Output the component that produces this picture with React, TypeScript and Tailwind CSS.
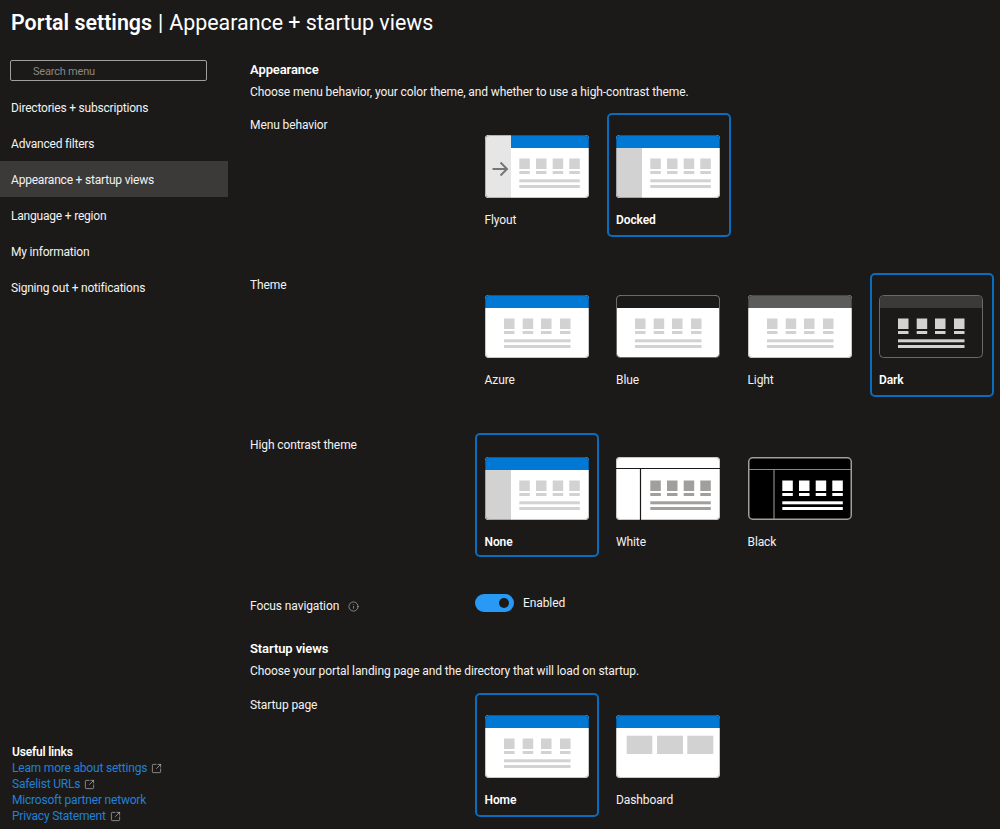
import { Info, SquareArrowOutUpRight } from 'lucide-react';

const MENU = [
  'Directories + subscriptions',
  'Advanced filters',
  'Appearance + startup views',
  'Language + region',
  'My information',
  'Signing out + notifications',
];

const LINKS = [
  { label: 'Learn more about settings', external: true },
  { label: 'Safelist URLs', external: true },
  { label: 'Microsoft partner network', external: false },
  { label: 'Privacy Statement', external: true },
];

type Variant =
  | 'flyout' | 'docked' | 'azure' | 'blue' | 'light' | 'dark'
  | 'none' | 'white' | 'black' | 'home' | 'dashboard';

const HEADER = 'M4 0H100a4 4 0 0 1 4 4V13H0V4a4 4 0 0 1 4-4Z';

function Blocks({ x, fill, w = 10.5 }: { x: number[]; fill: string; w?: number }) {
  const end = x[3] + w;
  return (
    <g fill={fill}>
      {x.map((v) => (
        <g key={v}>
          <rect x={v} y={23.5} width={w} height={10.5} />
          <rect x={v} y={36} width={w} height={3} />
        </g>
      ))}
      <rect x={x[0]} y={44.3} width={end - x[0]} height={3} />
      <rect x={x[0]} y={50} width={end - x[0]} height={3} />
    </g>
  );
}

const CENTER = [19, 37.7, 56, 75];
const RIGHT = [34.3, 51, 67.7, 84.3];

function Thumb({ variant }: { variant: Variant }) {
  let body = null;
  if (variant === 'flyout') {
    body = (
      <>
        <rect width="104" height="63" rx="4" fill="#fff" />
        <path d="M4 0H26V63H4a4 4 0 0 1-4-4V4a4 4 0 0 1 4-4Z" fill="#e6e6e6" />
        <path d="M26 0H100a4 4 0 0 1 4 4V13H26Z" fill="#0078d4" />
        <path d="M7.5 34H21.5M15.5 27.5L22 34L15.5 40.5" fill="none" stroke="#767676" strokeWidth="2" />
        <Blocks x={RIGHT} fill="#d2d2d2" />
      </>
    );
  } else if (variant === 'docked' || variant === 'none') {
    body = (
      <>
        <rect width="104" height="63" rx="4" fill="#fff" />
        <path d="M0 13H26V63H4a4 4 0 0 1-4-4Z" fill="#d2d2d2" />
        <path d={HEADER} fill="#0078d4" />
        <Blocks x={RIGHT} fill="#d2d2d2" />
      </>
    );
  } else if (variant === 'azure' || variant === 'home') {
    body = (
      <>
        <rect width="104" height="63" rx="4" fill="#fff" />
        <path d={HEADER} fill="#0078d4" />
        <Blocks x={CENTER} fill="#d2d2d2" />
      </>
    );
  } else if (variant === 'blue') {
    body = (
      <>
        <rect x=".5" y=".5" width="103" height="62" rx="4" fill="#fff" stroke="#6b6a69" />
        <path d="M4 1H100a3 3 0 0 1 3 3V13H1V4a3 3 0 0 1 3-3Z" fill="#1b1a19" />
        <Blocks x={CENTER} fill="#d2d2d2" />
      </>
    );
  } else if (variant === 'light') {
    body = (
      <>
        <rect width="104" height="63" rx="4" fill="#fff" />
        <path d={HEADER} fill="#5c5c5b" />
        <Blocks x={CENTER} fill="#d2d2d2" />
      </>
    );
  } else if (variant === 'dark') {
    body = (
      <>
        <rect x=".5" y=".5" width="103" height="62" rx="4" fill="#1b1a19" stroke="#6b6a69" />
        <path d="M4 1H100a3 3 0 0 1 3 3V13H1V4a3 3 0 0 1 3-3Z" fill="#3b3a39" />
        <Blocks x={CENTER} fill="#d2d2d2" />
      </>
    );
  } else if (variant === 'white') {
    body = (
      <>
        <rect width="104" height="63" rx="4" fill="#fff" />
        <path d="M0 11.5H104M24.5 11.5V63" stroke="#1b1a19" strokeWidth="1.2" fill="none" />
        <Blocks x={RIGHT} fill="#a19f9d" />
      </>
    );
  } else if (variant === 'black') {
    body = (
      <>
        <rect x=".75" y=".75" width="102.5" height="61.5" rx="4" fill="#000" stroke="#a19f9d" strokeWidth="1.5" />
        <path d="M1 12.5H103M26 12.5V62" stroke="#8a8886" strokeWidth="1.2" fill="none" />
        <Blocks x={RIGHT} fill="#fff" />
      </>
    );
  } else if (variant === 'dashboard') {
    body = (
      <>
        <rect width="104" height="63" rx="4" fill="#fff" />
        <path d={HEADER} fill="#0078d4" />
        <g fill="#d2d2d2">
          <rect x="10.7" y="20.7" width="25.6" height="18.3" />
          <rect x="41" y="20.7" width="26" height="18.3" />
          <rect x="71.3" y="20.7" width="26" height="18.3" />
        </g>
      </>
    );
  }
  const edged = variant !== 'blue' && variant !== 'dark' && variant !== 'black';
  return (
    <svg width="104" height="63" viewBox="0 0 104 63" className="block">
      {body}
      {edged && <rect x=".5" y=".5" width="103" height="62" rx="4" fill="none" stroke="#000" strokeOpacity=".22" />}
    </svg>
  );
}

function Option({ variant, label, selected, low }: { variant: Variant; label: string; selected?: boolean; low?: boolean }) {
  return (
    <div
      className={`w-[124px] h-[124px] rounded-[5px] border-2 pl-[7.5px] ${low ? 'pt-[22px]' : 'pt-[20px]'} ${
        selected ? 'border-[#0a6cbd]' : 'border-transparent'
      }`}
    >
      <Thumb variant={variant} />
      <div className={`mt-[14px] text-xs leading-4 ${selected ? 'font-semibold text-white' : 'text-[#f3f2f1]'}`}>
        {label}
      </div>
    </div>
  );
}

function OptionRow({ label, children }: { label: string; children: React.ReactNode }) {
  return (
    <div className="flex h-40">
      <div className="w-[225px] pt-1 text-xs leading-4">{label}</div>
      <div className="flex gap-[7.5px]">{children}</div>
    </div>
  );
}

export default function App() {
  return (
    <div className="h-[829px] overflow-hidden bg-[#1b1a19] text-[#f3f2f1] tracking-[-0.1px] font-['Roboto',sans-serif] flex flex-col">
      <div className="h-[46px] shrink-0 pl-[11px] flex items-center text-[21.4px] tracking-normal text-white">
        <span className="font-semibold">Portal settings</span>
        <span className="ml-[6px]">|</span>
        <span className="ml-[6px]">Appearance + startup views</span>
      </div>

      <div className="flex flex-1 min-h-0">
        {/* Sidebar */}
        <div className="w-[228px] shrink-0 flex flex-col tracking-[-0.2px]">
          <div className="mt-[14px] ml-[10px] w-[197px] h-[21px] border border-[#a19f9d] rounded-[2px] pl-[22px] text-[11px] leading-[21px] text-[#8a8886]">
            Search menu
          </div>
          <div className="mt-2">
            {MENU.map((item) => (
              <div
                key={item}
                className={`h-9 pl-[11px] pt-[2px] flex items-center text-xs ${
                  item === 'Appearance + startup views' ? 'bg-[#3b3a39]' : ''
                }`}
              >
                {item}
              </div>
            ))}
          </div>
          <div className="mt-auto pl-3 pb-[5px] text-xs leading-4">
            <div className="font-semibold text-white">Useful links</div>
            {LINKS.map((link) => (
              <div key={link.label} className="flex items-center gap-[4px] text-[#2280d6]">
                {link.label}
                {link.external && <SquareArrowOutUpRight size={11} strokeWidth={1.3} className="text-[#d2d0ce]" />}
              </div>
            ))}
          </div>
        </div>

        {/* Settings */}
        <div className="pl-[22px] pt-4 flex-1">
          <div className="text-[13px] leading-4 font-semibold text-white">Appearance</div>
          <div className="mt-[6px] text-xs leading-4">
            Choose menu behavior, your color theme, and whether to use a high-contrast theme.
          </div>

          <div className="mt-[13px]">
            <OptionRow label="Menu behavior">
              <Option variant="flyout" label="Flyout" />
              <Option variant="docked" label="Docked" selected />
            </OptionRow>
            <OptionRow label="Theme">
              <Option variant="azure" label="Azure" />
              <Option variant="blue" label="Blue" />
              <Option variant="light" label="Light" />
              <Option variant="dark" label="Dark" selected />
            </OptionRow>
            <OptionRow label="High contrast theme">
              <Option variant="none" label="None" selected low />
              <Option variant="white" label="White" low />
              <Option variant="black" label="Black" low />
            </OptionRow>
          </div>

          <div className="mt-px flex h-[18px]">
            <div className="w-[225px] pt-[4px] text-xs leading-4 flex items-start gap-[9px]">
              Focus navigation
              <Info size={11} strokeWidth={1.3} className="mt-[3px] text-[#c8c6c4]" />
            </div>
            <div className="w-[39px] h-[18px] rounded-full bg-[#2899f5] flex items-center justify-end pr-[5px]">
              <div className="w-[10px] h-[10px] rounded-full bg-[#1b1a19]" />
            </div>
            <div className="ml-[9px] text-xs leading-[18px]">Enabled</div>
          </div>

          <div className="mt-[29px] text-[13px] leading-4 font-semibold text-white">Startup views</div>
          <div className="mt-[6px] text-xs leading-4">
            Choose your portal landing page and the directory that will load on startup.
          </div>

          <div className="mt-[14px]">
            <OptionRow label="Startup page">
              <Option variant="home" label="Home" selected />
              <Option variant="dashboard" label="Dashboard" />
            </OptionRow>
          </div>
        </div>
      </div>
    </div>
  );
}
